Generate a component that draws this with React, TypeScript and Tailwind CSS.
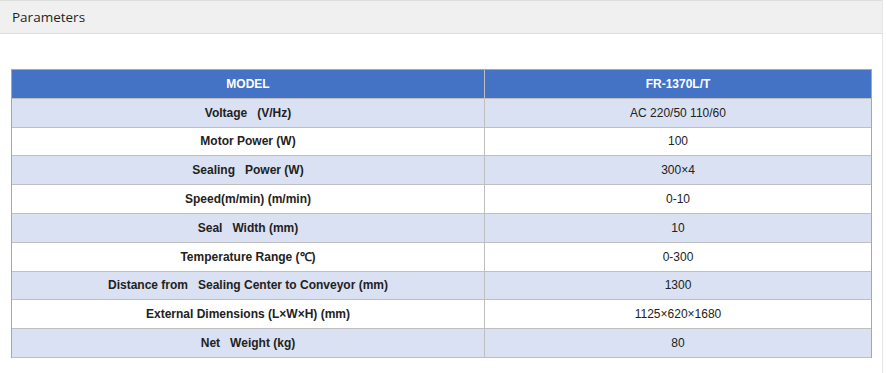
import React from "react";

const rows: [string, string][] = [
  ["Voltage\u00a0\u00a0\u00a0(V/Hz)", "AC 220/50 110/60"],
  ["Motor Power (W)", "100"],
  ["Sealing\u00a0\u00a0\u00a0Power (W)", "300×4"],
  ["Speed(m/min) (m/min)", "0-10"],
  ["Seal\u00a0\u00a0\u00a0Width (mm)", "10"],
  ["Temperature Range (℃)", "0-300"],
  ["Distance from\u00a0\u00a0\u00a0Sealing Center to Conveyor (mm)", "1300"],
  ["External Dimensions (L×W×H) (mm)", "1125×620×1680"],
  ["Net\u00a0\u00a0\u00a0Weight (kg)", "80"],
];

export default function App() {
  return (
    <div className="w-[883px] h-[373px] bg-white border-r border-[#e5e5e5]">
      <div className="h-[34px] bg-[#f0f0f0] border-y border-[#dddddd] flex items-center pl-[12px]">
        <span className="text-[13.5px] text-[#1f1f1f] font-['Open_Sans',sans-serif]">Parameters</span>
      </div>
      <div className="pt-[35px] pl-[11px]">
        <div className="w-[861px] border-t border-l border-r border-t-[#94a9d8] border-l-[#8eaadb] border-r-[#8eaadb] font-['Liberation_Sans',Arial,sans-serif] text-[12px]">
          <div className="flex h-[28.8px] bg-[#4472c4] border-b border-[#bfbfbf] text-white font-bold">
            <div className="w-[472px] flex items-center justify-center">MODEL</div>
            <div className="w-px bg-[#bfbfbf]" />
            <div className="flex-1 flex items-center justify-center">FR-1370L/T</div>
          </div>
          {rows.map(([k, v], i) => (
            <div
              key={i}
              className={`flex h-[28.8px] border-b border-[#bfbfbf] text-[#222] ${i % 2 === 0 ? "bg-[#d9e1f2]" : "bg-white"}`}
            >
              <div className="w-[472px] flex items-center justify-center font-bold">{k}</div>
              <div className="w-px bg-[#bfbfbf]" />
              <div className="flex-1 flex items-center justify-center">{v}</div>
            </div>
          ))}
        </div>
      </div>
    </div>
  );
}
